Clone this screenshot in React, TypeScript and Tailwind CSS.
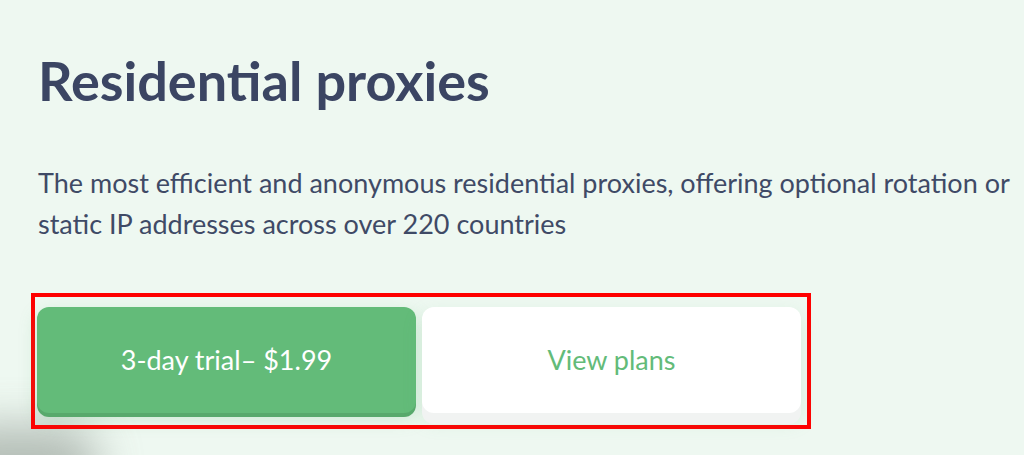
import React from "react";

export default function App() {
  return (
    <div
      className="relative w-[1024px] h-[455px] overflow-hidden bg-[#eef8f1] pl-[38px] pt-[49px]"
      style={{ fontFamily: "Lato, 'Noto Sans', sans-serif" }}
    >
      <div className="pointer-events-none absolute left-[-60px] bottom-[-50px] h-[80px] w-[160px] rounded-full bg-[#8f9891] opacity-60 blur-[22px]" />
      <h1 className="text-[54px] font-bold leading-[1.2] text-[#3b4563]">Residential proxies</h1>
      <p className="mt-[48px] w-[985px] text-[27px] leading-[41px] text-[#3f4a66]">
        The most efficient and anonymous residential proxies, offering optional rotation or static IP addresses across over 220 countries
      </p>
      <div className="relative mt-[49px] ml-[-7px] w-[780px] h-[136px] border-[4px] border-[#ff0000] pl-[2px] pt-[10px]">
        <div className="flex gap-[6px]">
          <div className="flex h-[106px] w-[379px] items-center justify-center rounded-[12px] bg-[#63bb79] text-[27px] text-white shadow-[0_4px_0_#58a96c,0_6px_18px_rgba(99,187,121,0.25)]">
            3-day trial– $1.99
          </div>
          <div className="flex h-[106px] w-[379px] items-center justify-center rounded-[12px] bg-white text-[27px] text-[#63bb79] shadow-[0_11px_0_#f1f3f2,0_8px_20px_rgba(99,187,121,0.18)]">
            View plans
          </div>
        </div>
      </div>
    </div>
  );
}
